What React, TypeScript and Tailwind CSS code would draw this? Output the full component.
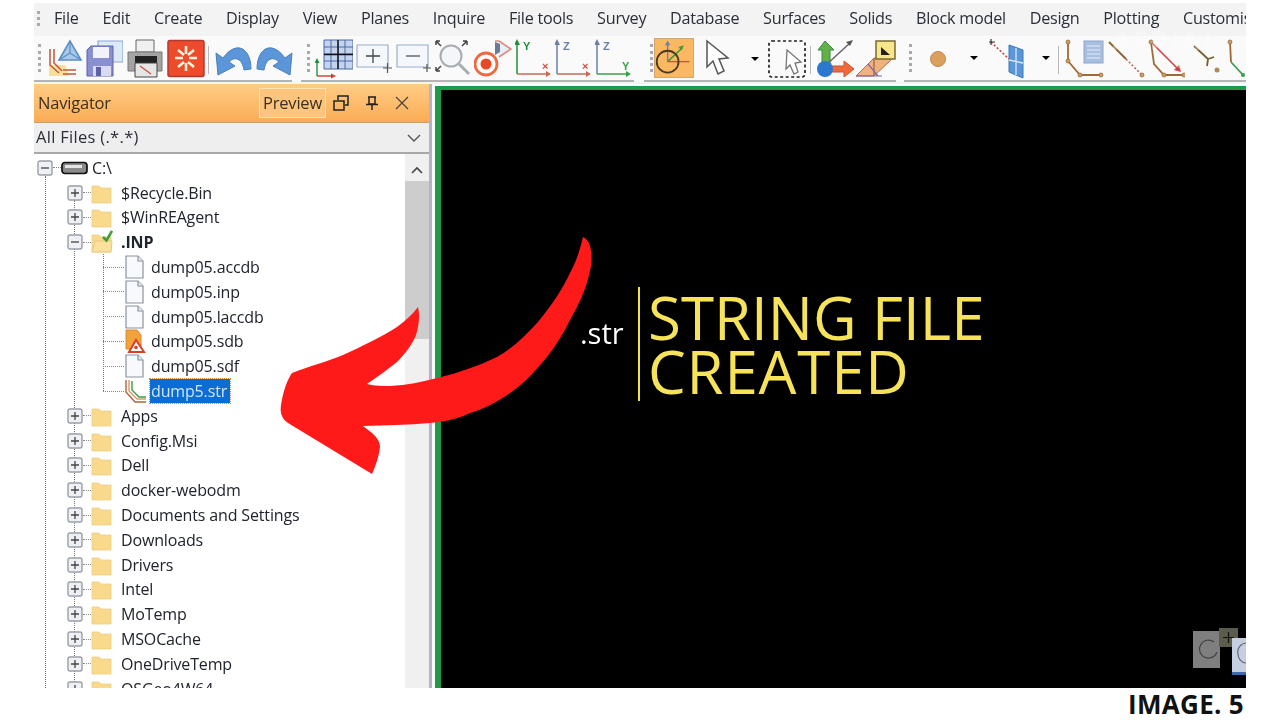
import React from "react";

const menu = ["File","Edit","Create","Display","View","Planes","Inquire","File tools","Survey","Database","Surfaces","Solids","Block model","Design","Plotting","Customise"];

type Row = { t: string; kind: "folder" | "open" | "file" | "sdb" | "str"; sel?: boolean; bold?: boolean; minus?: boolean };
const rows: Row[] = [
  { t: "$Recycle.Bin", kind: "folder" },
  { t: "$WinREAgent", kind: "folder" },
  { t: ".INP", kind: "open", bold: true, minus: true },
  { t: "dump05.accdb", kind: "file" },
  { t: "dump05.inp", kind: "file" },
  { t: "dump05.laccdb", kind: "file" },
  { t: "dump05.sdb", kind: "sdb" },
  { t: "dump05.sdf", kind: "file" },
  { t: "dump5.str", kind: "str", sel: true },
  { t: "Apps", kind: "folder" },
  { t: "Config.Msi", kind: "folder" },
  { t: "Dell", kind: "folder" },
  { t: "docker-webodm", kind: "folder" },
  { t: "Documents and Settings", kind: "folder" },
  { t: "Downloads", kind: "folder" },
  { t: "Drivers", kind: "folder" },
  { t: "Intel", kind: "folder" },
  { t: "MoTemp", kind: "folder" },
  { t: "MSOCache", kind: "folder" },
  { t: "OneDriveTemp", kind: "folder" },
  { t: "OSGeo4W64", kind: "folder" },
];

function Expander({ minus }: { minus?: boolean }) {
  return (
    <svg width="16" height="16" viewBox="0 0 16 16" className="shrink-0">
      <rect x="1" y="1" width="14" height="14" rx="2" fill="#eef0f4" stroke="#9a9ea8" strokeWidth="1.4" />
      <path d={minus ? "M4 8h8" : "M4 8h8M8 4v8"} stroke="#444" strokeWidth="1.3" />
    </svg>
  );
}

function Folder({ open }: { open?: boolean }) {
  return (
    <svg width="22" height="24" viewBox="0 0 22 24" className="shrink-0">
      <path d="M1 5h7l2 2h10v15H1z" fill="#f9d98c" stroke="#eccd8c" strokeWidth="0.8" />
      {open && <path d="M1 22l3-11h17l-1 11z" fill="#fbe0a0" stroke="#e3c27d" strokeWidth="0.8" />}
      {open && <path d="M12 7l3.500 3.500L21 1" fill="none" stroke="#3fa037" strokeWidth="2.600" />}
    </svg>
  );
}

function FileIcon({ kind }: { kind: Row["kind"] }) {
  if (kind === "sdb")
    return (
      <svg width="22" height="24" viewBox="0 0 22 24" className="shrink-0">
        <path d="M2 1h11l4 5v14H2z" fill="#f3a23c" stroke="#d98a2a" />
        <path d="M12 11l8 12H5z" fill="#fff" stroke="#d9402a" strokeWidth="2" />
        <circle cx="12" cy="18.500" r="1.800" fill="#d9402a" />
      </svg>
    );
  if (kind === "str")
    return (
      <svg width="22" height="24" viewBox="0 0 22 24" className="shrink-0" fill="none">
        <path d="M2 1v12l9 10h11" stroke="#a9653a" strokeWidth="1.400" />
        <path d="M5 1v11l8 8h9" stroke="#d99a6a" strokeWidth="1.400" />
        <path d="M8 2v9l7 7h7" stroke="#3c9a4a" strokeWidth="1.400" />
      </svg>
    );
  return (
    <svg width="22" height="24" viewBox="0 0 22 24" className="shrink-0">
      <path d="M2 1h12l5 5v17H2z" fill="#f7f9fc" stroke="#8b93a0" strokeWidth="1.200" />
      <path d="M14 1v5h5" fill="#e6ebf2" stroke="#8b93a0" strokeWidth="1.200" />
    </svg>
  );
}

function TreeRow({ r }: { r: Row }) {
  const isChild = r.kind === "file" || r.kind === "sdb" || r.kind === "str";
  return (
    <div className="h-[24.8px] flex items-center shrink-0">
      {isChild ? (
        <>
          <div className="w-[21px] ml-[69px] border-t border-dotted border-[#888]" />
          <FileIcon kind={r.kind} />
        </>
      ) : (
        <>
          <div className="ml-[33px]"><Expander minus={r.minus} /></div>
          <div className="w-[8px] border-t border-dotted border-[#888]" />
          <Folder open={r.kind === "open"} />
        </>
      )}
      <span
        className={
          (r.sel ? "ml-[4px] pl-px pr-[3px] bg-[#0a6cd4] text-[#cfe6ff] outline-1 outline-dotted outline-[#d09030] " : isChild ? "ml-[5px] text-[#20242e] " : "ml-[8px] text-[#20242e] ") +
          (r.bold ? "font-bold" : "")
        }
      >
        {r.t}
      </span>
    </div>
  );
}

function Ico({ w, ml, children }: { w: number; ml: string; children: React.ReactNode }) {
  return (
    <svg width={w} height="44" viewBox={`0 0 ${w} 44`} fill="none" className={"shrink-0 " + ml}>
      {children}
    </svg>
  );
}

function Gripper({ ml }: { ml: string }) {
  return <div className={"w-[3px] h-[28px] border-l-[3px] border-dotted border-[#aaa] shrink-0 " + ml} />;
}
function Sep({ ml }: { ml: string }) {
  return <div className={"w-px h-[28px] bg-[#b8b8b8] shrink-0 " + ml} />;
}
function Drop({ ml }: { ml: string }) {
  return <div className={"w-0 h-0 border-l-[4px] border-r-[4px] border-t-[4px] border-l-transparent border-r-transparent border-t-black shrink-0 " + ml} />;
}
function Node({ x, y }: { x: number; y: number }) {
  return <circle cx={x} cy={y} r="2" fill="#c9a06a" stroke="#9a6a35" strokeWidth="0.8" />;
}

const lab = { fontFamily: "'Liberation Sans', sans-serif", fontSize: 11, fontWeight: 700 };

function Axes({ a, b, ac, bc, al, bl }: { a: string; b: string; ac: string; bc: string; al: string; bl: string }) {
  return (
    <Ico w={37} ml="ml-[3px]">
      <path d="M2 38V7" stroke={ac} strokeWidth="1.500" />
      <path d="M2 3l-3 6h6z" fill={ac} />
      <path d="M2 38h31" stroke={bc} strokeWidth="1.500" />
      <path d="M36 38l-5-3v6z" fill={bc} />
      <text x="8" y="14" fill={al} style={lab}>{a}</text>
      <text x="27" y="34" fill={bl} style={lab}>{b}</text>
    </Ico>
  );
}

export default function App() {
  return (
    <div className="relative w-[1280px] h-[720px] bg-white overflow-hidden font-['Open_Sans',sans-serif]">
      <div className="ml-[34px] mt-[3px] w-[1212px] h-[685px] flex flex-col overflow-hidden bg-[#f4f4f4] blur-[0.4px]">
        {/* menu */}
        <div className="h-[33px] flex items-center pb-[2px] shrink-0 bg-[#f3f3f3] overflow-hidden text-[#2a2e38] text-[16.200px] tracking-[-0.25px] whitespace-nowrap">
          <div className="w-[3px] h-[15px] ml-[3px] border-l-[3px] border-dotted border-[#aaa] shrink-0" />
          <div className="flex gap-[23.800px] ml-[14px]">
            {menu.map((m) => (
              <span key={m}>{m}</span>
            ))}
          </div>
        </div>
        {/* toolbar */}
        <div className="h-[46px] flex shrink-0 overflow-hidden bg-[#fafafa]">
          <div className="w-[258px] h-[46px] border-b-2 border-[#b4b4b4] flex items-start pl-[4px] shrink-0">
            <Gripper ml="mt-[8px]" />
            <Ico w={38} ml="ml-[5px]">
              <path d="M24 5l-11 19h22z" fill="#a8c8ea" stroke="#5b8fc4" strokeWidth="1.600" />
              <path d="M24 5v12M24 17l-11 7M24 17l11 7" stroke="#5b8fc4" strokeWidth="1.200" />
              <path d="M3 29h16l4 11H3z" fill="#f8dfa0" />
              <path d="M4 13v16l9 8M8 13v14l8 8M17 34h13M17 38h13" stroke="#c0553a" strokeWidth="1.500" />
            </Ico>
            <Ico w={38} ml="ml-[1px]">
              <path d="M13 5h25v21H13z" fill="#dce9f8" stroke="#8aa8cc" strokeWidth="1.200" />
              <path d="M2 14l4-4h22v30H2z" fill="#8a8fd0" stroke="#5d62a6" strokeWidth="1" />
              <path d="M8 11h16v11H8z" fill="#f2f2fa" />
              <path d="M8 30h18v10H8z" fill="#d8daf0" />
              <path d="M11 31h5v9h-5z" fill="#5d62a6" />
            </Ico>
            <Ico w={36} ml="ml-[4px]">
              <path d="M9 4h18v12H9z" fill="#f0f0f0" stroke="#666" />
              <path d="M1 16h34v19H1z" fill="#a4a4a4" stroke="#777" />
              <path d="M8 20h22v7H8z" fill="#222" />
              <path d="M8 27h22v14H8z" fill="#e6e6e6" stroke="#444" />
              <path d="M13 30l11 8" stroke="#d05040" strokeWidth="1.200" />
            </Ico>
            <Ico w={38} ml="ml-[4px]">
              <rect x="1" y="4.500" width="36" height="36" rx="2" fill="#ee4a2c" stroke="#b13a30" strokeWidth="1.500" />
              <path d="M19 10v8M19 27v8M8 22h8M22 22h8M11 14l6 5M27 14l-6 5M11 31l6-5M27 31l-6-5" stroke="#fff6da" strokeWidth="2.600" />
            </Ico>
            <Sep ml="ml-[3px] mt-[10px]" />
            <Ico w={38} ml="ml-[6px]">
              <path d="M1 17l2 22 17-9-6-4c6-6 13-4 15 8l7-1C36 13 22 3 8 22z" fill="#5b97d8" stroke="#4a80bc" />
            </Ico>
            <Ico w={38} ml="ml-[2px]">
              <path d="M37 17l-2 22-17-9 6-4c-6-6-13-4-15 8l-7-1C2 13 16 3 30 22z" fill="#5b97d8" stroke="#4a80bc" />
            </Ico>
          </div>
          <div className="w-[333px] h-[46px] border-b-2 border-[#b4b4b4] flex items-start ml-[9px] pl-[6px] shrink-0">
            <Gripper ml="mt-[8px]" />
            <Ico w={38} ml="ml-[5px]">
              <path d="M9 4h29v29H9z" fill="#c4d4ec" />
              <path d="M9 4h29v29H9zM9 11h29M9 18h29M9 25h29M16 4v29M30 4v29M23 4v29" stroke="#4a68a8" strokeWidth="1" />
              <path d="M23 4v29M9 18.500h29" stroke="#111" strokeWidth="1.400" />
              <path d="M2 40V25" stroke="#22903a" strokeWidth="1.400" />
              <path d="M2 22l-2.500 5h5z" fill="#22903a" />
              <path d="M2 40h16" stroke="#c84030" strokeWidth="1.400" />
              <path d="M21 40l-5-2.500v5z" fill="#c84030" />
            </Ico>
            <Ico w={38} ml="ml-[2px]">
              <path d="M2 9h31v22H2z" fill="#f4f7fc" stroke="#9ab0cc" strokeWidth="1.200" />
              <path d="M11 20h14M18 13v14" stroke="#444" strokeWidth="1.300" />
              <path d="M28 32h9M32.500 27v10" stroke="#555" strokeWidth="1.200" />
            </Ico>
            <Ico w={37} ml="ml-[2px]">
              <path d="M2 9h31v22H2z" fill="#f4f7fc" stroke="#9ab0cc" strokeWidth="1.200" />
              <path d="M11 20h14" stroke="#555" strokeWidth="1.300" />
              <path d="M28 32h8M32 28v8" stroke="#555" strokeWidth="1.200" />
            </Ico>
            <Ico w={40} ml="">
              <circle cx="19" cy="20" r="10.500" fill="#f4f6f8" stroke="#a8acb2" strokeWidth="2" />
              <path d="M27 28l10 10" stroke="#a8acb2" strokeWidth="3" />
              <path d="M4 5l5 5M4 5h4M4 5v4M35 5l-5 5M35 5h-4M35 5v4M4 35l5-5M4 35h4M4 35v-4" stroke="#444" strokeWidth="1.500" />
            </Ico>
            <Ico w={38} ml="ml-[2px]">
              <path d="M21 5h4l12 8-12 8" stroke="#e08a78" strokeWidth="1.600" fill="#e8eefa" />
              <path d="M21 6l5 2v8l-5 3z" fill="#6a7a98" />
              <circle cx="12" cy="28" r="11" fill="#fff" stroke="#ee6a40" strokeWidth="2.800" />
              <circle cx="12" cy="28" r="5.500" fill="#e8482a" />
            </Ico>
            <Axes a="Y" b="×" ac="#22903a" bc="#c86a5a" al="#22903a" bl="#d05040" />
            <Axes a="Z" b="×" ac="#6a80a8" bc="#c86a5a" al="#6a80a8" bl="#d05040" />
            <Axes a="Z" b="Y" ac="#6a80a8" bc="#3aa04a" al="#6a80a8" bl="#3aa04a" />
          </div>
          <div className="w-[252px] h-[46px] border-b-2 border-[#b4b4b4] flex items-start ml-[10px] pl-[6px] shrink-0">
            <Gripper ml="mt-[8px]" />
            <Ico w={40} ml="ml-[1px] bg-[#fbb863] outline-1 outline-[#cfa878] -outline-offset-1 h-[40px] mt-[2px]">
              <path d="M13 26V6" stroke="#6a80a8" strokeWidth="1.500" />
              <path d="M13 3l-3 5h6z" fill="#6a80a8" />
              <path d="M13 26L29 11" stroke="#3a9a3a" strokeWidth="1.600" />
              <path d="M31 8l-6 2 3 4z" fill="#3a9a3a" />
              <path d="M13 26h24" stroke="#c05a30" strokeWidth="1.500" />
              <circle cx="13" cy="26" r="12" stroke="#4a3a20" strokeWidth="2" />
            </Ico>
            <Ico w={26} ml="ml-[11px]">
              <path d="M2 5l21 17-9 1 5 12-6 3-5-13-6 6z" fill="#fff" stroke="#555" strokeWidth="1.500" />
            </Ico>
            <Drop ml="ml-[20px] mt-[21px]" />
            <Ico w={39} ml="ml-[9px]">
              <rect x="1" y="5" width="36" height="36" rx="3" stroke="#222" strokeWidth="1.700" strokeDasharray="3 2.500" />
              <path d="M19 14l14 12-6 1 3 9-4 2-4-9-4 4z" fill="#fff" stroke="#777" strokeWidth="1.300" />
            </Ico>
            <Sep ml="ml-[3px] mt-[10px]" />
            <Ico w={40} ml="ml-[5px]">
              <path d="M9 5l-7 9h4v14h8V14h4z" fill="#62b04a" stroke="#3a8a3a" />
              <path d="M10 29L34 7" stroke="#666" strokeWidth="1.500" />
              <path d="M37 4l-7 2 4 4z" fill="#555" />
              <path d="M14 30h14v-5l10 8-10 8v-5H14z" fill="#ee6a3a" stroke="#d0502a" />
              <circle cx="9" cy="33" r="8" fill="#2a78d0" />
            </Ico>
            <Ico w={40} ml="">
              <path d="M0 40l18-18v18zM18 22h18v1L18 40z" fill="#efb27c" stroke="#a5744a" strokeWidth="1" />
              <path d="M0 40h26M12 28l10 12" stroke="#8a60b0" strokeWidth="1.200" />
              <rect x="20" y="5" width="19" height="18" fill="#f7e68a" stroke="#7a6a30" strokeWidth="1.500" />
              <path d="M25 11l9 8h-9z" fill="#222" />
            </Ico>
          </div>
          <div className="flex-1 h-[46px] border-b-2 border-[#b4b4b4] flex items-start ml-[8px] pl-[5px] overflow-hidden">
            <Gripper ml="mt-[8px]" />
            <Ico w={16} ml="ml-[18px]">
              <circle cx="8" cy="23" r="7.500" fill="#dca05e" stroke="#b98a54" />
            </Ico>
            <Drop ml="ml-[24px] mt-[20px]" />
            <Ico w={36} ml="ml-[11px]">
              <path d="M20 9l14 5v28l-14-6z" fill="#5a96da" stroke="#3e78b8" />
              <path d="M27 12v27M20 24l14 3" stroke="#dbe9f9" strokeWidth="1.300" />
              <path d="M2 6l18 17" stroke="#c84040" strokeWidth="1.600" strokeDasharray="2 2" />
              <path d="M-1 6h7M2 3v6" stroke="#333" strokeWidth="1.200" />
            </Ico>
            <Drop ml="ml-[17px] mt-[20px]" />
            <Sep ml="ml-[8px] mt-[10px]" />
            <Ico w={40} ml="ml-[6px]">
              <path d="M3 6v19l12 14h21" stroke="#a06a35" strokeWidth="1.800" />
              <Node x={3} y={6} /><Node x={3} y={25} /><Node x={15} y={39} /><Node x={36} y={39} />
              <rect x="19" y="5" width="19" height="22" fill="#a9bfe0" stroke="#8ea6c8" />
              <path d="M22 10h13M22 14h13M22 18h13M22 22h13" stroke="#e4ecf8" />
            </Ico>
            <Ico w={37} ml="ml-[3px]">
              <path d="M1 6l17 17" stroke="#8a6030" strokeWidth="1.800" />
              <path d="M18 23l16 16" stroke="#c05050" strokeWidth="1.400" strokeDasharray="2 2" />
              <Node x={34} y={39} />
            </Ico>
            <Ico w={37} ml="ml-[3px]">
              <path d="M3 6l3 22 10 11h20" stroke="#a06a35" strokeWidth="1.800" />
              <path d="M3 6l28 28" stroke="#d04040" strokeWidth="1.600" />
              <path d="M33 36l-7-2 5-5z" fill="#d04040" />
              <Node x={3} y={6} /><Node x={16} y={39} /><Node x={36} y={39} />
            </Ico>
            <Ico w={30} ml="ml-[6px]">
              <path d="M3 10l14 13M17 23l6-2M17 23l-1 7" stroke="#7a6030" strokeWidth="1.800" />
              <circle cx="26" cy="34" r="2.500" fill="#b08a5a" />
            </Ico>
            <Ico w={24} ml="ml-[4px]">
              <path d="M5 6l1 20" stroke="#a06a35" strokeWidth="1.800" />
              <path d="M6 26l12 13" stroke="#3a9a4a" strokeWidth="1.800" />
              <Node x={5} y={6} /><circle cx="18" cy="39" r="2" fill="#3a9a4a" />
            </Ico>
          </div>
        </div>
        {/* main */}
        <div className="flex-1 flex min-h-0 bg-white mt-[2px]">
          <div className="w-[395px] shrink-0 flex flex-col min-h-0">
            <div className="h-[39px] shrink-0 bg-gradient-to-b from-[#ffcc85] to-[#fbac54] border-b border-[#c0a070] flex items-center pl-[4px] text-[#3a3020] text-[16.500px] tracking-[-0.2px]">
              <span className="w-[221px] shrink-0">Navigator</span>
              <div className="w-[67px] h-[30px] bg-[#fcc47c] border border-[#ffe3b8] flex items-center justify-center shrink-0">Preview</div>
              <svg width="16" height="16" viewBox="0 0 16 16" fill="none" stroke="#222" strokeWidth="1.500" className="ml-[7px]">
                <path d="M1 6h10v9H1zM5 5V1h10v9h-3" />
              </svg>
              <svg width="14" height="16" viewBox="0 0 14 16" fill="none" stroke="#222" strokeWidth="1.500" className="ml-[16px]">
                <path d="M3 2h8M4 2v7h6V2M1 9.500h12M7 10v5" />
              </svg>
              <svg width="14" height="14" viewBox="0 0 14 14" fill="none" stroke="#444" strokeWidth="1.200" className="ml-[16px]">
                <path d="M1 1l12 12M13 1L1 13" />
              </svg>
            </div>
            <div className="h-[31px] shrink-0 bg-[#eeeeee] border-b-2 border-[#a8a8a8] flex items-center justify-between pl-[2px] pr-[8px] text-[16.500px] tracking-[0.3px] text-[#2a2e38]">
              <span>All Files (.*.*)</span>
              <svg width="14" height="8" viewBox="0 0 14 8" fill="none" stroke="#555" strokeWidth="1.400"><path d="M1 1l6 6 6-6" /></svg>
            </div>
            <div className="flex-1 flex min-h-0">
              <div className="relative flex-1 overflow-hidden bg-white text-[16px] tracking-[-0.15px] whitespace-nowrap">
                <div className="absolute left-[11px] top-[22px] bottom-0 border-l border-dotted border-[#777]" />
                <div className="absolute left-[40px] top-[46px] bottom-0 border-l border-dotted border-[#777]" />
                <div className="absolute left-[69px] top-[100px] h-[137px] border-l border-dotted border-[#777]" />
                <div className="relative flex flex-col">
                  <div className="h-[24.8px] flex items-center shrink-0 mt-[1.500px]">
                    <div className="ml-[3px]"><Expander minus /></div>
                    <div className="w-[8px] border-t border-dotted border-[#888]" />
                    <svg width="27" height="16" viewBox="0 0 27 16" className="shrink-0">
                      <rect x="1" y="2.500" width="25" height="11" rx="3" fill="#8a8a8a" stroke="#111" strokeWidth="1.700" />
                      <rect x="4" y="5" width="17" height="3" fill="#e4e4e4" />
                    </svg>
                    <span className="ml-[4px] text-[#20242e]">C:\</span>
                  </div>
                  {rows.map((r) => (
                    <TreeRow key={r.t} r={r} />
                  ))}
                </div>
              </div>
              <div className="w-[24px] shrink-0 bg-[#f0f0f0] flex flex-col items-center">
                <svg width="12" height="8" viewBox="0 0 12 8" fill="none" stroke="#444" strokeWidth="1.600" className="mt-[12px]"><path d="M1 7l5-5 5 5" /></svg>
                <div className="w-full h-[158px] bg-[#cdcdcd] mt-[7px]" />
              </div>
            </div>
          </div>
          <div className="w-[3px] shrink-0 bg-[#b4b4c8]" />
          <div className="w-[3px] shrink-0 bg-[#fafafa]" />
          <div className="flex-1 bg-black border-l-[6px] border-t-[4px] mt-[2px] border-[#1f9a4a] flex items-start pl-[139px] pt-[197px] text-white min-w-0">
            <span className="text-[29px] leading-none mt-[31px] w-[58px] shrink-0">.str</span>
            <div className="border-l-2 border-[#f4e04e] h-[114px] pl-[8px] text-[#f6e35a] text-[60px] leading-[54px] pt-[3px] whitespace-nowrap">
              <div>STRING FILE</div>
              <div className="tracking-[0.8px]">CREATED</div>
            </div>
          </div>
        </div>
      </div>

      <div className="h-[32px] flex items-center justify-end pr-[36px] text-[26px] font-bold text-[#111] tracking-[0.3px]">IMAGE. 5</div>

      {/* watermark and corner widget over the video */}
      <div className="absolute left-[1112px] top-[27px] text-white/30 text-[26px] font-bold tracking-[3px] leading-none">ASRIAL</div>
      <div className="absolute left-[1105px] top-[58px] text-white/30 text-[11px] tracking-[11px] leading-none">SURVEY</div>
      <svg width="54" height="48" viewBox="0 0 54 48" className="absolute left-[1192px] top-[628px]">
        <rect x="1" y="3" width="27" height="37" fill="#7f7f7f" />
        <path d="M22 14a9 9 0 1 0 3 10" fill="none" stroke="#444" strokeWidth="1.200" />
        <rect x="27" y="0" width="19" height="19" fill="#5c5c4c" />
        <path d="M31 9.500h11M36.500 4v11" stroke="#111" strokeWidth="1.200" />
        <rect x="40" y="10" width="14" height="36" fill="#c6cfe0" />
        <path d="M54 15a9 9 0 0 0-8 11 9 9 0 0 0 8 9" fill="none" stroke="#667" strokeWidth="1.200" />
        <rect x="40" y="44" width="14" height="3" fill="#3a6ab0" />
      </svg>

      {/* red arrow */}
      <svg width="1280" height="720" viewBox="0 0 1280 720" className="absolute left-0 top-0 pointer-events-none">
        <path
          d="M583 237C590 240 592 250 591.500 263C588 285 580 303 570 320C558 345 542 365 523 383C505 398 488 408 470 413C455 420 442 422 430 423C408 425 385 425 363 426C372 433 380 438 380 447C379 456 376 465 372 474L288 423C281 418 280 412 281 405C283 392 287 380 292 373C310 366 326 362 343 355C362 346 380 338 397 327C405 321 412 315 418 307C420 315 419 325 416 335C412 345 405 354 397 362C387 370 377 377 367 384C375 386 382 386 390 386C407 385 422 382 437 378C458 373 478 366 497 357C512 349 525 336 537 323C552 305 562 290 570 273C576 262 580 250 583 237Z"
          fill="#ff1a1a"
        />
      </svg>
    </div>
  );
}
